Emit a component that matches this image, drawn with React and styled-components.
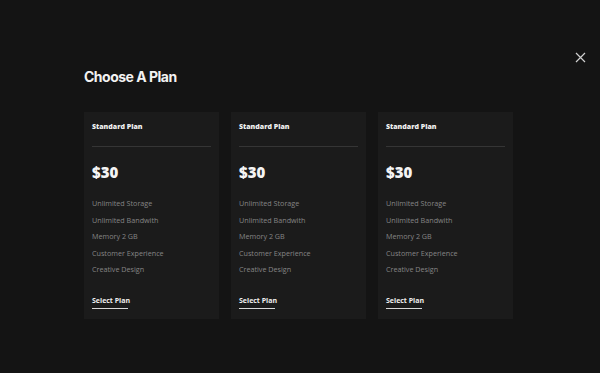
import React from "react";
import styled, { createGlobalStyle } from "styled-components";

const Global = createGlobalStyle`
  html, body { margin: 0; padding: 0; background: #141414; }
  body { font-family: "Open Sans", "Liberation Sans", sans-serif; }
`;

const Page = styled.div`
  width: 600px;
  height: 373px;
  box-sizing: border-box;
  background: #141414;
  padding: 51px 14px 0 84px;
  display: flex;
  flex-direction: column;
`;

const TopBar = styled.div`
  display: flex;
  justify-content: flex-end;
  height: 12px;
`;

const Close = styled.button`
  width: 12px;
  height: 12px;
  padding: 0;
  border: 0;
  background: none;
  display: flex;
  align-items: center;
  justify-content: center;
  cursor: pointer;
`;

const Heading = styled.h1`
  margin: 5px 0 0;
  font-family: "Inter", "Liberation Sans", sans-serif;
  font-weight: 700;
  font-size: 14px;
  line-height: 18px;
  color: #f2f2f2;
  letter-spacing: -0.5px;
`;

const Cards = styled.div`
  display: flex;
  gap: 12px;
  margin-top: 26px;
`;

const Card = styled.div`
  width: 135px;
  height: 207px;
  box-sizing: border-box;
  background: #1b1b1b;
  padding: 10px 8px 0;
  display: flex;
  flex-direction: column;
`;

const Title = styled.div`
  font-family: "Open Sans", sans-serif;
  font-weight: 800;
  font-size: 7px;
  line-height: 9px;
  color: #f0f0f0;
`;

const Divider = styled.div`
  height: 1px;
  background: #353535;
  margin-top: 15px;
`;

const Price = styled.div`
  margin-top: 16px;
  font-family: "Open Sans", sans-serif;
  font-weight: 800;
  font-size: 15px;
  line-height: 18px;
  color: #f4f4f4;
`;

const Features = styled.ul`
  list-style: none;
  margin: 18px 0 0;
  padding: 0;
  display: flex;
  flex-direction: column;
  gap: 7.6px;
`;

const Feature = styled.li`
  font-family: "Open Sans", sans-serif;
  font-size: 7.2px;
  line-height: 9px;
  color: #858585;
`;

const SelectButton = styled.button`
  align-self: flex-start;
  margin-top: 21.5px;
  padding: 0 0 3px;
  background: none;
  border: 0;
  border-bottom: 1.5px solid #d8d8d8;
  font-family: "Open Sans", sans-serif;
  font-weight: 700;
  font-size: 7px;
  line-height: 9px;
  color: #eeeeee;
  width: 36px;
  text-align: left;
  white-space: nowrap;
`;

const features = [
  "Unlimited Storage",
  "Unlimited Bandwith",
  "Memory 2 GB",
  "Customer Experience",
  "Creative Design",
];

const plans = [0, 1, 2];

export default function App() {
  return (
    <>
      <Global />
      <Page>
        <TopBar>
          <Close aria-label="Close">
            <svg width="11" height="11" viewBox="0 0 11 11">
              <path d="M1 1L10 10M10 1L1 10" stroke="#d0d0d0" strokeWidth="1.2" />
            </svg>
          </Close>
        </TopBar>
        <Heading>Choose A Plan</Heading>
        <Cards>
          {plans.map((p) => (
            <Card key={p}>
              <Title>Standard Plan</Title>
              <Divider />
              <Price>$30</Price>
              <Features>
                {features.map((f) => (
                  <Feature key={f}>{f}</Feature>
                ))}
              </Features>
              <SelectButton>Select Plan</SelectButton>
            </Card>
          ))}
        </Cards>
      </Page>
    </>
  );
}
